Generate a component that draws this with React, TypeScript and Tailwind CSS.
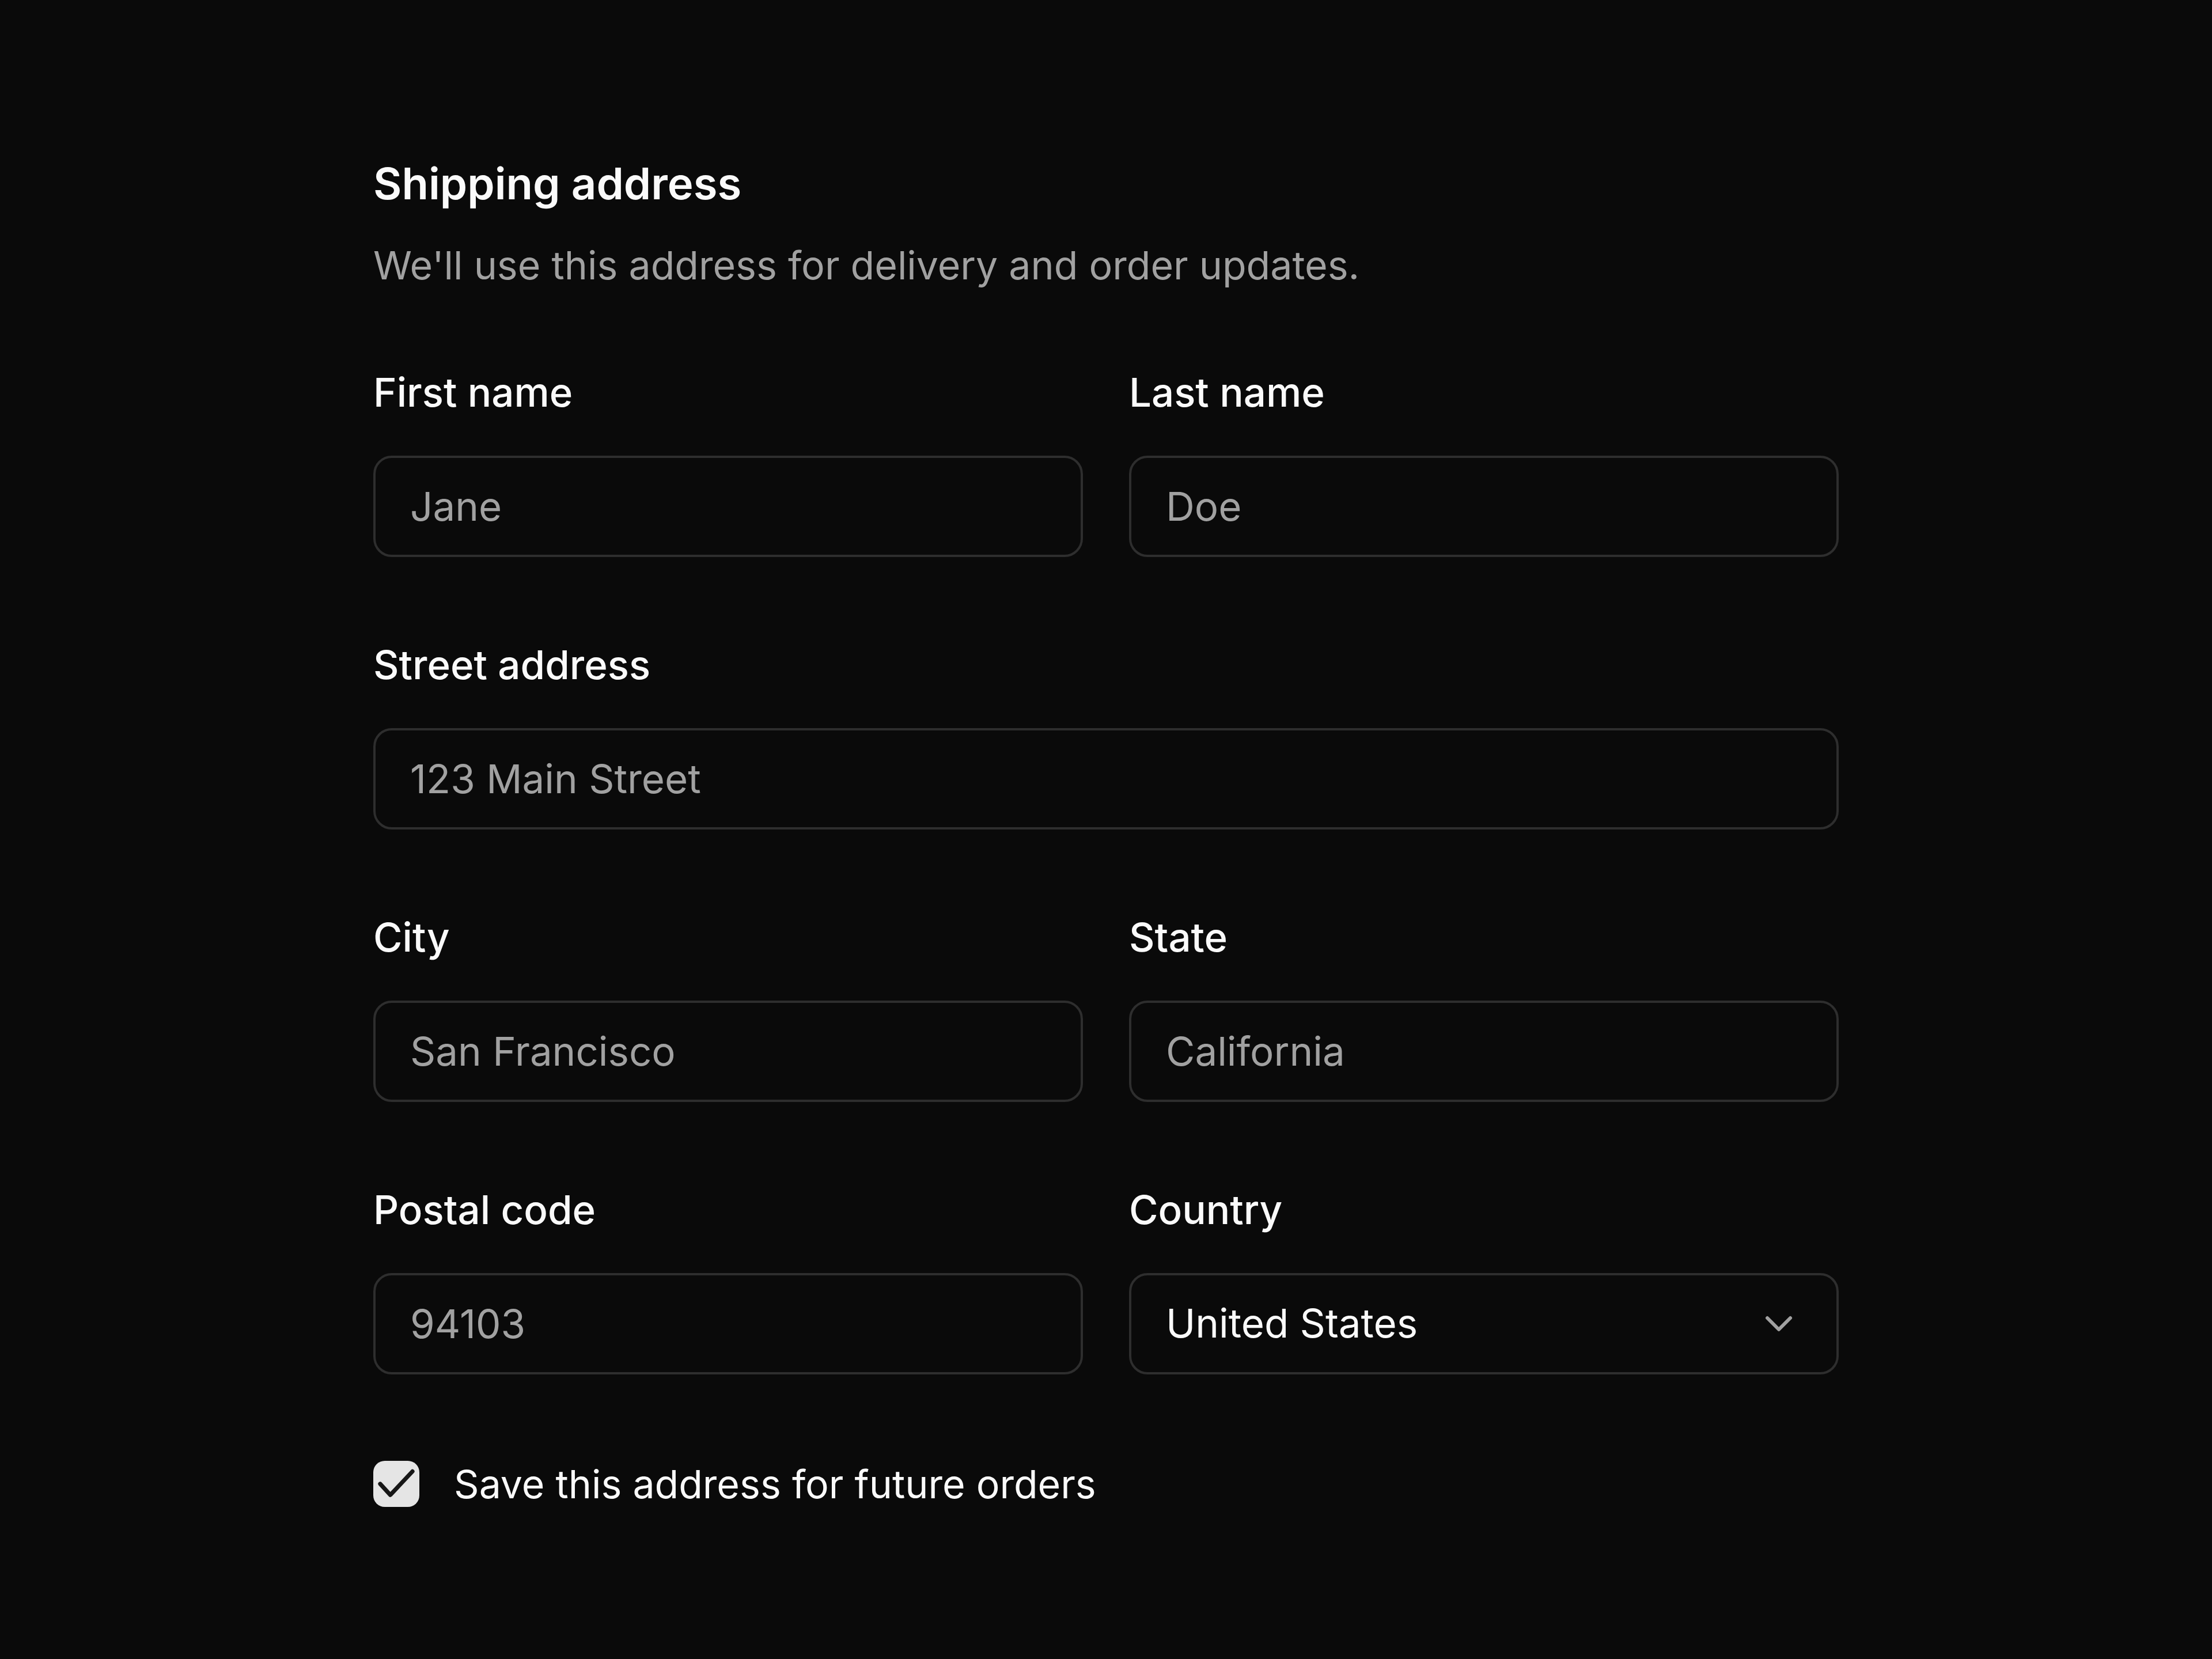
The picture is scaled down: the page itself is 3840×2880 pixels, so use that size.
import { ReactNode } from 'react'

interface FieldProps {
  label: string
  children: ReactNode
}

function Field({ label, children }: FieldProps) {
  return (
    <div className="flex flex-col">
      <label className="text-[69px] leading-[96px] font-medium text-neutral-50">{label}</label>
      <div className="mt-[62px]">{children}</div>
    </div>
  )
}

function TextInput({ placeholder }: { placeholder: string }) {
  return (
    <input
      type="text"
      placeholder={placeholder}
      className="h-[176px] w-full rounded-[32px] border-[4px] border-[#2e2e2e] bg-[#0a0a0a] px-[60px] text-[69px] text-neutral-50 placeholder:text-neutral-400 outline-none"
    />
  )
}

function CountrySelect() {
  return (
    <button
      type="button"
      className="flex h-[176px] w-full items-center justify-between rounded-[32px] border-[4px] border-[#2e2e2e] bg-[#0a0a0a] pl-[60px] pr-[76px] text-[69px] text-neutral-50"
    >
      <span>United States</span>
      <svg width="48" height="28" viewBox="0 0 12 7" fill="none" className="text-neutral-400">
        <path d="M1 1l5 5 5-5" stroke="currentColor" strokeWidth="1.5" strokeLinecap="round" strokeLinejoin="round" />
      </svg>
    </button>
  )
}

export default function App() {
  return (
    <div className="min-h-screen bg-[#0a0a0a] font-['Inter',sans-serif] antialiased">
      <div className="mx-auto w-[2544px] pt-[262px] pb-[256px]">
        <h2 className="text-[76px] leading-[112px] font-semibold text-neutral-50">Shipping address</h2>
        <p className="mt-[38px] text-[68px] leading-[96px] text-neutral-400">
          We'll use this address for delivery and order updates.
        </p>

        <div className="mt-[125px] flex flex-col gap-[139px]">
          <div className="grid grid-cols-2 gap-[80px]">
            <Field label="First name">
              <TextInput placeholder="Jane" />
            </Field>
            <Field label="Last name">
              <TextInput placeholder="Doe" />
            </Field>
          </div>

          <Field label="Street address">
            <TextInput placeholder="123 Main Street" />
          </Field>

          <div className="grid grid-cols-2 gap-[80px]">
            <Field label="City">
              <TextInput placeholder="San Francisco" />
            </Field>
            <Field label="State">
              <TextInput placeholder="California" />
            </Field>
          </div>

          <div className="grid grid-cols-2 gap-[80px]">
            <Field label="Postal code">
              <TextInput placeholder="94103" />
            </Field>
            <Field label="Country">
              <CountrySelect />
            </Field>
          </div>
        </div>

        <label className="mt-[142px] flex items-center gap-[60px]">
          <span className="flex h-[80px] w-[80px] items-center justify-center rounded-[20px] bg-[#e5e5e5]">
            <svg width="80" height="80" viewBox="0 0 20 20" fill="none">
              <path
                d="M3 10l4.4 4.8L17 4.6"
                stroke="#171717"
                strokeWidth="1.8"
                strokeLinecap="round"
                strokeLinejoin="round"
              />
            </svg>
          </span>
          <span className="text-[68px] leading-[96px] text-neutral-50">Save this address for future orders</span>
        </label>
      </div>
    </div>
  )
}
